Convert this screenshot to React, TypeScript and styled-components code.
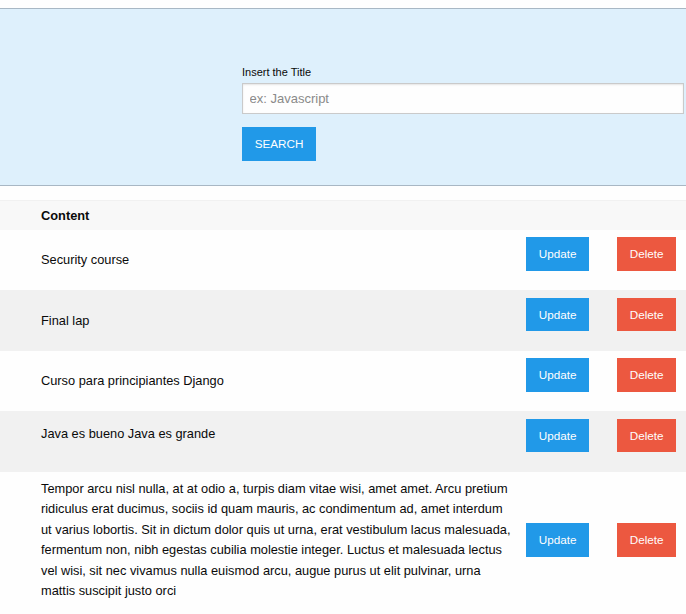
import React from "react";
import styled, { createGlobalStyle } from "styled-components";

const GlobalStyle = createGlobalStyle`
  html, body { margin: 0; padding: 0; background: #fefefe; }
  body {
    font-family: "Liberation Sans", Arial, Helvetica, sans-serif;
    font-size: 13px;
    color: #0a0a0a;
  }
  * { box-sizing: border-box; }
`;

const Page = styled.div`
  display: flex;
  flex-direction: column;
  padding-top: 8px;
`;

const SearchSection = styled.section`
  background: #def0fc;
  border-top: 1px solid #a8b7c4;
  border-bottom: 1px solid #a8b7c4;
  padding: 54px 2px 11px 242px;
`;

const Form = styled.form`
  display: flex;
  flex-direction: column;
  align-items: flex-start;
`;

const Label = styled.label`
  display: block;
  width: 100%;
  font-size: 11px;
  line-height: 19.8px;
  color: #0a0a0a;
`;

const Input = styled.input`
  display: block;
  width: 100%;
  height: 31.7px;
  margin: 0 0 13px;
  padding: 6.5px;
  border: 1px solid #cacaca;
  border-radius: 0;
  background: #fefefe;
  box-shadow: inset 0 1px 2px rgba(10, 10, 10, 0.1);
  font-family: inherit;
  font-size: 13px;
  color: #0a0a0a;
  outline: none;
  &::placeholder { color: #8a8a8a; }
`;

const Button = styled.button<{ $variant?: "primary" | "alert" }>`
  display: inline-block;
  margin: 0;
  padding: 9.9px 11.7px;
  border: 1px solid transparent;
  border-radius: 0;
  background: ${(p) => (p.$variant === "alert" ? "#ec5840" : "#2199e8")};
  color: #fefefe;
  font-family: inherit;
  font-size: 11.7px;
  line-height: 1;
  text-align: center;
  white-space: nowrap;
  cursor: pointer;
`;

const SearchButton = styled(Button)`
  margin-bottom: 13px;
`;

const Table = styled.div`
  display: flex;
  flex-direction: column;
  margin-top: 14px;
`;

const HeadRow = styled.div`
  display: flex;
  align-items: center;
  height: 30px;
  padding-left: 41px;
  background: #f8f8f8;
  border-top: 1px solid #f1f1f1;
  font-weight: bold;
  font-size: 12.8px;
`;

const Row = styled.div<{ $striped?: boolean; $tall?: boolean }>`
  display: grid;
  grid-template-columns: 473px 63px 59px;
  column-gap: 12px;
  align-items: ${(p) => (p.$tall ? "center" : "start")};
  min-height: 60.5px;
  padding: ${(p) => (p.$tall ? "7px 10px 8px 41px" : "0 10px 0 41px")};
  background: ${(p) => (p.$striped ? "#f1f1f1" : "#fefefe")};
  & > :nth-child(3) { margin-left: 16px; }
`;

const TextCell = styled.div<{ $top?: number }>`
  font-size: 12.8px;
  line-height: 20.4px;
  align-self: ${(p) => (p.$top !== undefined ? "start" : "center")};
  margin-top: ${(p) => (p.$top !== undefined ? `${p.$top}px` : "0")};
`;

const ActionCell = styled.div<{ $tall?: boolean }>`
  display: flex;
  margin-top: ${(p) => (p.$tall ? "0" : "7.5px")};
`;

type Item = { text: string; top?: number };

const items: Item[] = [
  { text: "Security course" },
  { text: "Final lap" },
  { text: "Curso para principiantes Django" },
  { text: "Java es bueno Java es grande", top: 13 },
  {
    text:
      "Tempor arcu nisl nulla, at at odio a, turpis diam vitae wisi, amet amet. Arcu pretium ridiculus erat ducimus, sociis id quam mauris, ac condimentum ad, amet interdum ut varius lobortis. Sit in dictum dolor quis ut urna, erat vestibulum lacus malesuada, fermentum non, nibh egestas cubilia molestie integer. Luctus et malesuada lectus vel wisi, sit nec vivamus nulla euismod arcu, augue purus ut elit pulvinar, urna mattis suscipit justo orci",
  },
];

export default function App() {
  return (
    <>
      <GlobalStyle />
      <Page>
        <SearchSection>
          <Form onSubmit={(e) => e.preventDefault()}>
            <Label>
              Insert the Title
              <Input type="text" placeholder="ex: Javascript" />
            </Label>
            <SearchButton type="submit">SEARCH</SearchButton>
          </Form>
        </SearchSection>
        <Table>
          <HeadRow>Content</HeadRow>
          {items.map((it, i) => {
            const tall = it.text.length > 100;
            return (
              <Row key={i} $striped={i % 2 === 1} $tall={tall}>
                <TextCell $top={it.top}>{it.text}</TextCell>
                <ActionCell $tall={tall}>
                  <Button>Update</Button>
                </ActionCell>
                <ActionCell $tall={tall}>
                  <Button $variant="alert">Delete</Button>
                </ActionCell>
              </Row>
            );
          })}
        </Table>
      </Page>
    </>
  );
}
